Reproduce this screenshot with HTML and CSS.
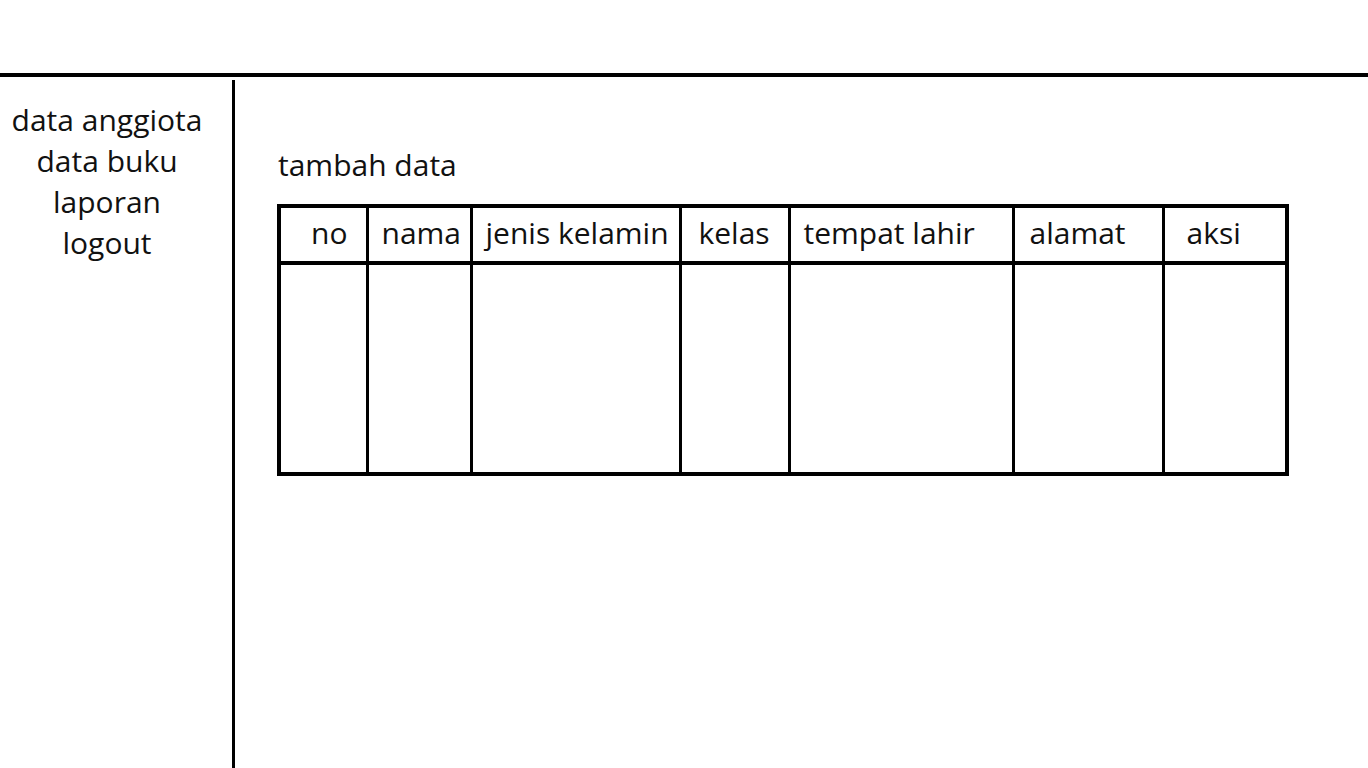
FILE: index.html
```html
<!DOCTYPE html>
<html lang="id">
<head>
  <meta charset="UTF-8" />
  <meta name="viewport" content="width=device-width, initial-scale=1.0" />
  <title>Data Anggota</title>
  <link rel="stylesheet" href="styles.css">
</head>
<body>
  <header class="topbar"></header>

  <div class="layout">
    <!-- menu samping -->
    <nav class="sidebar">
      <a href="#">data anggiota</a>
      <a href="#">data buku</a>
      <a href="#">laporan</a>
      <a href="#">logout</a>
    </nav>

    <main class="content">
      <p class="add-link">tambah data</p>
      <table class="data-table">
        <colgroup>
          <col style="width: 88px">
          <col style="width: 104px">
          <col style="width: 209px">
          <col style="width: 109px">
          <col style="width: 224px">
          <col style="width: 150px">
          <col>
        </colgroup>
        <thead>
          <tr>
            <th class="col-no">no</th>
            <th>nama</th>
            <th>jenis kelamin</th>
            <th class="col-kelas">kelas</th>
            <th>tempat lahir</th>
            <th class="col-alamat">alamat</th>
            <th class="col-aksi">aksi</th>
          </tr>
        </thead>
        <tbody>
          <tr>
            <td></td><td></td><td></td><td></td><td></td><td></td><td></td>
          </tr>
        </tbody>
      </table>
    </main>
  </div>
</body>
</html>
```

FILE: styles.css
```css
* {
  box-sizing: border-box;
  margin: 0;
  padding: 0;
}
body {
  font-family: 'Open Sans', 'Noto Sans', sans-serif;
  background-color: #fff;
  color: #111;
  height: 768px;
  overflow: hidden;
}
.topbar {
  height: 77px;
  border-bottom: 4px solid #000;
}
.layout {
  display: flex;
  height: 691px;
}
.sidebar {
  width: 235px;
  margin-top: 3px;
  border-right: 3px solid #000;
  padding: 19px 18px 0 0;
  display: flex;
  flex-direction: column;
  align-items: center;
}
.sidebar a {
  color: #111;
  text-decoration: none;
  font-size: 30px;
  line-height: 41px;
}
.content {
  flex: 1;
  padding: 69px 0 0 42px;
}
.add-link {
  font-size: 30px;
  line-height: 38px;
  margin-left: 1px;
  margin-bottom: 20px;
}
.data-table {
  width: 1012px;
  border-collapse: collapse;
  table-layout: fixed;
  border: 4px solid #000;
}
.data-table th,
.data-table td {
  border-left: 3px solid #000;
  border-right: 3px solid #000;
}
.data-table th {
  height: 57px;
  font-size: 30px;
  font-weight: normal;
  text-align: left;
  padding: 0 0 5px 13px;
  border-bottom: 4px solid #000;
  white-space: nowrap;
}
.data-table th.col-no {
  padding-left: 30px;
}
.data-table th.col-kelas {
  padding-left: 17px;
}
.data-table th.col-alamat {
  padding-left: 15px;
}
.data-table th.col-aksi {
  padding-left: 22px;
}
.data-table td {
  height: 211px;
}
```
